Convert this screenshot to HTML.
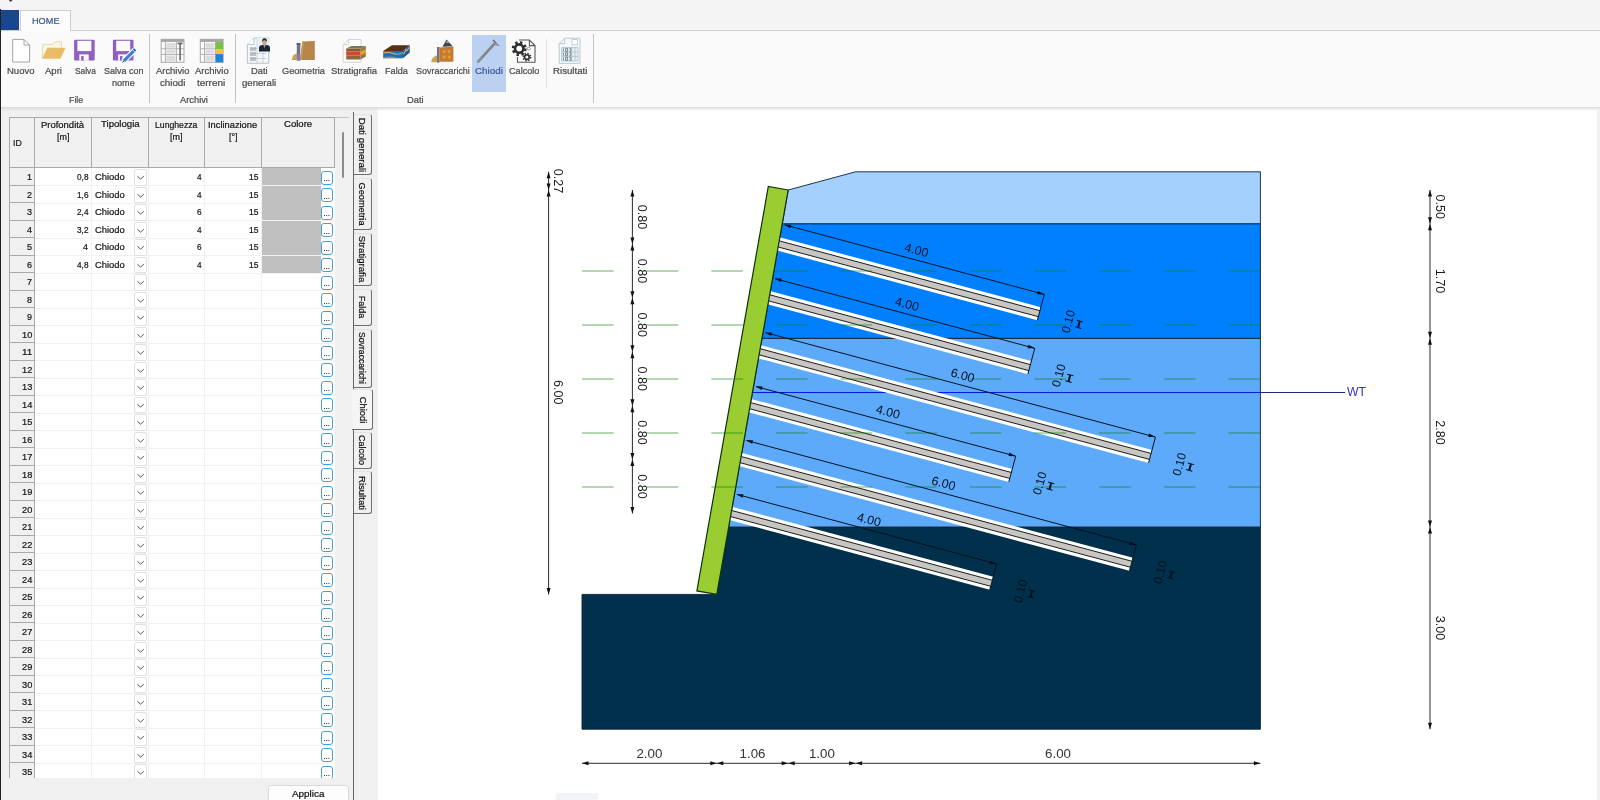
<!DOCTYPE html>
<html lang="it"><head><meta charset="utf-8"><title>Chiodi</title>
<style>
html,body{margin:0;padding:0}
body{width:1600px;height:800px;position:relative;overflow:hidden;background:#fff;font-family:"Liberation Sans",sans-serif;will-change:transform}
.abs{position:absolute}
.t{position:absolute;white-space:nowrap;display:block;transform-origin:0 0;-webkit-text-stroke:0.22px currentColor}

.titlebar{position:absolute;left:0;top:0;width:1600px;height:30px;background:#f4f4f4}
.appbtn{position:absolute;left:0;top:10px;width:18.8px;height:20.7px;background:#19478f}
.tab{position:absolute;left:20px;top:10px;width:50.8px;height:21px;background:#fcfcfc;border:1px solid #cfcfcf;border-bottom:none;box-sizing:border-box}
.rbody{position:absolute;left:0;top:30px;width:1600px;height:76.5px;background:#fafafa;border-top:1px solid #cfcfcf;box-sizing:border-box}
.rshadow{position:absolute;left:0;top:106.5px;width:1600px;height:4.5px;background:linear-gradient(#d9d9d9,rgba(225,225,225,0))}

#grid{position:absolute;left:0;top:0;width:349px;height:778px;overflow:hidden}
.rh{position:absolute;left:9px;width:25.5px;height:17.5px;background:#f0f0f0;border:1px solid #a9a9a9;border-top:none;box-sizing:border-box}
.hl{position:absolute;left:34.5px;width:300px;height:1px;background:#f1f1f1}
.dd{position:absolute;left:133.5px;width:13.5px;height:16.5px;background:#fff;border:1px solid #e1e1e1;border-radius:2px;box-sizing:border-box;overflow:hidden}
.dd svg{position:absolute;left:-1px;top:-1px}
.eb{position:absolute;left:320.7px;width:12.5px;height:14px;background:#fff;border:1.2px solid #4b9fd0;border-radius:3px;box-sizing:border-box}
.eb i{position:absolute;left:2.2px;top:8.6px;width:1px;height:1px;background:#333;box-shadow:2.2px 0 0 #333,4.4px 0 0 #333}
.vtab{position:absolute;left:354px;width:17.5px;background:#f0f0f0;border-top:1px solid #e3e3e3;border-right:1.5px solid #6e6e6e;border-bottom:1.5px solid #6e6e6e;border-radius:0 3px 3px 0;box-sizing:border-box}
.vtab.sel{left:351.5px;width:21.5px;background:#f5f5f5;border-top:1px solid #e3e3e3;border-left:none}
</style></head>
<body>
<svg id="cv" class="abs" style="left:378px;top:107px" width="1222" height="693" viewBox="378 107 1222 693" font-family="'Liberation Sans',sans-serif">
<polygon points="728.7,527.0 1260.4,527.0 1260.4,729.2 582.0,729.2 582.0,594.4 716.8,594.4" fill="#00304b" stroke="#0b2238" stroke-width="0.9"/>
<polygon points="762.0,338.3 1260.4,338.3 1260.4,527.0 728.7,527.0" fill="#5daafa" stroke="#0b2238" stroke-width="0.9"/>
<polygon points="782.3,223.7 1260.4,223.7 1260.4,338.3 762.0,338.3" fill="#0080ff" stroke="#0b2238" stroke-width="0.9"/>
<polygon points="788.2,190.0 855.6,171.8 1260.4,171.8 1260.4,223.7 782.3,223.7" fill="#a4d0fe" stroke="#0b2238" stroke-width="0.9"/>
<line x1="752.5" y1="392.5" x2="1260.4" y2="392.5" stroke="#0818e0" stroke-width="1"/>
<line x1="1260.4" y1="392.5" x2="1345.2" y2="392.5" stroke="#28287a" stroke-width="1"/>
<text x="1347" y="396.2" font-size="12.6" fill="#3530c8" textLength="19" lengthAdjust="spacingAndGlyphs">WT</text>
<g transform="translate(778.72,243.92) rotate(15.0)">
<rect x="0" y="-6.75" width="269.6" height="13.5" fill="#fff"/>
<rect x="0" y="-3.1" width="269.6" height="6.2" fill="#c8c6c2"/>
<line x1="0" y1="-3.1" x2="269.6" y2="-3.1" stroke="#1a1a1a" stroke-width="0.9"/>
<line x1="0" y1="3.1" x2="269.6" y2="3.1" stroke="#1a1a1a" stroke-width="0.9"/>
</g>
<g transform="translate(769.19,297.84) rotate(15.0)">
<rect x="0" y="-6.75" width="269.6" height="13.5" fill="#fff"/>
<rect x="0" y="-3.1" width="269.6" height="6.2" fill="#c8c6c2"/>
<line x1="0" y1="-3.1" x2="269.6" y2="-3.1" stroke="#1a1a1a" stroke-width="0.9"/>
<line x1="0" y1="3.1" x2="269.6" y2="3.1" stroke="#1a1a1a" stroke-width="0.9"/>
</g>
<g transform="translate(759.67,351.76) rotate(15.0)">
<rect x="0" y="-6.75" width="404.4" height="13.5" fill="#fff"/>
<rect x="0" y="-3.1" width="404.4" height="6.2" fill="#c8c6c2"/>
<line x1="0" y1="-3.1" x2="404.4" y2="-3.1" stroke="#1a1a1a" stroke-width="0.9"/>
<line x1="0" y1="3.1" x2="404.4" y2="3.1" stroke="#1a1a1a" stroke-width="0.9"/>
</g>
<g transform="translate(750.14,405.68) rotate(15.0)">
<rect x="0" y="-6.75" width="269.6" height="13.5" fill="#fff"/>
<rect x="0" y="-3.1" width="269.6" height="6.2" fill="#c8c6c2"/>
<line x1="0" y1="-3.1" x2="269.6" y2="-3.1" stroke="#1a1a1a" stroke-width="0.9"/>
<line x1="0" y1="3.1" x2="269.6" y2="3.1" stroke="#1a1a1a" stroke-width="0.9"/>
</g>
<g transform="translate(740.61,459.60) rotate(15.0)">
<rect x="0" y="-6.75" width="404.4" height="13.5" fill="#fff"/>
<rect x="0" y="-3.1" width="404.4" height="6.2" fill="#c8c6c2"/>
<line x1="0" y1="-3.1" x2="404.4" y2="-3.1" stroke="#1a1a1a" stroke-width="0.9"/>
<line x1="0" y1="3.1" x2="404.4" y2="3.1" stroke="#1a1a1a" stroke-width="0.9"/>
</g>
<g transform="translate(731.09,513.52) rotate(15.0)">
<rect x="0" y="-6.75" width="269.6" height="13.5" fill="#fff"/>
<rect x="0" y="-3.1" width="269.6" height="6.2" fill="#c8c6c2"/>
<line x1="0" y1="-3.1" x2="269.6" y2="-3.1" stroke="#1a1a1a" stroke-width="0.9"/>
<line x1="0" y1="3.1" x2="269.6" y2="3.1" stroke="#1a1a1a" stroke-width="0.9"/>
</g>
<polygon points="788.2,190.0 768.3,186.5 696.9,590.9 716.8,594.4" fill="#9acd32" stroke="#10300a" stroke-width="1.2"/>
<line x1="582.0" y1="271" x2="1260.4" y2="271" stroke="#008000" stroke-opacity="0.6" stroke-width="1" stroke-dasharray="31.6 33.05"/>
<line x1="582.0" y1="325" x2="1260.4" y2="325" stroke="#008000" stroke-opacity="0.6" stroke-width="1" stroke-dasharray="31.6 33.05"/>
<line x1="582.0" y1="379" x2="1260.4" y2="379" stroke="#008000" stroke-opacity="0.6" stroke-width="1" stroke-dasharray="31.6 33.05"/>
<line x1="582.0" y1="433" x2="1260.4" y2="433" stroke="#008000" stroke-opacity="0.6" stroke-width="1" stroke-dasharray="31.6 33.05"/>
<line x1="582.0" y1="487" x2="1260.4" y2="487" stroke="#008000" stroke-opacity="0.6" stroke-width="1" stroke-dasharray="31.6 33.05"/>
<g transform="translate(778.72,243.92) rotate(15.0)">
<line x1="1" y1="-20.0" x2="269.6" y2="-20.0" stroke="#02101f" stroke-width="0.9"/>
<line x1="269.6" y1="-20.0" x2="269.6" y2="6.75" stroke="#02101f" stroke-width="0.9"/>
<polygon points="0.0,-20.0 7.0,-21.8 7.0,-18.2" fill="#02101f"/>
<polygon points="269.6,-20.0 262.6,-18.2 262.6,-21.8" fill="#02101f"/>
<text x="134.8" y="-25.5" font-size="12.4" fill="#02101f" text-anchor="middle">4.00</text>
<g transform="translate(299.6,0) rotate(-90)"><text x="0" y="4.2" font-size="12" fill="#02101f" text-anchor="middle">0.10</text></g>
<path d="M310.8 -3.3 L310.8 3.3" stroke="#02101f" stroke-width="2" fill="none"/>
<path d="M307.6 -3.4 L314.0 -3.4 M307.6 3.4 L314.0 3.4" stroke="#02101f" stroke-width="1" fill="none"/>
</g>
<g transform="translate(769.19,297.84) rotate(15.0)">
<line x1="1" y1="-20.0" x2="269.6" y2="-20.0" stroke="#02101f" stroke-width="0.9"/>
<line x1="269.6" y1="-20.0" x2="269.6" y2="6.75" stroke="#02101f" stroke-width="0.9"/>
<polygon points="0.0,-20.0 7.0,-21.8 7.0,-18.2" fill="#02101f"/>
<polygon points="269.6,-20.0 262.6,-18.2 262.6,-21.8" fill="#02101f"/>
<text x="134.8" y="-25.5" font-size="12.4" fill="#02101f" text-anchor="middle">4.00</text>
<g transform="translate(299.6,0) rotate(-90)"><text x="0" y="4.2" font-size="12" fill="#02101f" text-anchor="middle">0.10</text></g>
<path d="M310.8 -3.3 L310.8 3.3" stroke="#02101f" stroke-width="2" fill="none"/>
<path d="M307.6 -3.4 L314.0 -3.4 M307.6 3.4 L314.0 3.4" stroke="#02101f" stroke-width="1" fill="none"/>
</g>
<g transform="translate(759.67,351.76) rotate(15.0)">
<line x1="1" y1="-20.0" x2="404.4" y2="-20.0" stroke="#02101f" stroke-width="0.9"/>
<line x1="404.4" y1="-20.0" x2="404.4" y2="6.75" stroke="#02101f" stroke-width="0.9"/>
<polygon points="0.0,-20.0 7.0,-21.8 7.0,-18.2" fill="#02101f"/>
<polygon points="404.4,-20.0 397.4,-18.2 397.4,-21.8" fill="#02101f"/>
<text x="202.2" y="-25.5" font-size="12.4" fill="#02101f" text-anchor="middle">6.00</text>
<g transform="translate(434.4,0) rotate(-90)"><text x="0" y="4.2" font-size="12" fill="#02101f" text-anchor="middle">0.10</text></g>
<path d="M445.6 -3.3 L445.6 3.3" stroke="#02101f" stroke-width="2" fill="none"/>
<path d="M442.4 -3.4 L448.8 -3.4 M442.4 3.4 L448.8 3.4" stroke="#02101f" stroke-width="1" fill="none"/>
</g>
<g transform="translate(750.14,405.68) rotate(15.0)">
<line x1="1" y1="-20.0" x2="269.6" y2="-20.0" stroke="#02101f" stroke-width="0.9"/>
<line x1="269.6" y1="-20.0" x2="269.6" y2="6.75" stroke="#02101f" stroke-width="0.9"/>
<polygon points="0.0,-20.0 7.0,-21.8 7.0,-18.2" fill="#02101f"/>
<polygon points="269.6,-20.0 262.6,-18.2 262.6,-21.8" fill="#02101f"/>
<text x="134.8" y="-25.5" font-size="12.4" fill="#02101f" text-anchor="middle">4.00</text>
<g transform="translate(299.6,0) rotate(-90)"><text x="0" y="4.2" font-size="12" fill="#02101f" text-anchor="middle">0.10</text></g>
<path d="M310.8 -3.3 L310.8 3.3" stroke="#02101f" stroke-width="2" fill="none"/>
<path d="M307.6 -3.4 L314.0 -3.4 M307.6 3.4 L314.0 3.4" stroke="#02101f" stroke-width="1" fill="none"/>
</g>
<g transform="translate(740.61,459.60) rotate(15.0)">
<line x1="1" y1="-20.0" x2="404.4" y2="-20.0" stroke="#02101f" stroke-width="0.9"/>
<line x1="404.4" y1="-20.0" x2="404.4" y2="6.75" stroke="#02101f" stroke-width="0.9"/>
<polygon points="0.0,-20.0 7.0,-21.8 7.0,-18.2" fill="#02101f"/>
<polygon points="404.4,-20.0 397.4,-18.2 397.4,-21.8" fill="#02101f"/>
<text x="202.2" y="-25.5" font-size="12.4" fill="#02101f" text-anchor="middle">6.00</text>
<g transform="translate(434.4,0) rotate(-90)"><text x="0" y="4.2" font-size="12" fill="#02101f" text-anchor="middle">0.10</text></g>
<path d="M445.6 -3.3 L445.6 3.3" stroke="#02101f" stroke-width="2" fill="none"/>
<path d="M442.4 -3.4 L448.8 -3.4 M442.4 3.4 L448.8 3.4" stroke="#02101f" stroke-width="1" fill="none"/>
</g>
<g transform="translate(731.09,513.52) rotate(15.0)">
<line x1="1" y1="-20.0" x2="269.6" y2="-20.0" stroke="#02101f" stroke-width="0.9"/>
<line x1="269.6" y1="-20.0" x2="269.6" y2="6.75" stroke="#02101f" stroke-width="0.9"/>
<polygon points="0.0,-20.0 7.0,-21.8 7.0,-18.2" fill="#02101f"/>
<polygon points="269.6,-20.0 262.6,-18.2 262.6,-21.8" fill="#02101f"/>
<text x="134.8" y="-25.5" font-size="12.4" fill="#02101f" text-anchor="middle">4.00</text>
<g transform="translate(299.6,0) rotate(-90)"><text x="0" y="4.2" font-size="12" fill="#02101f" text-anchor="middle">0.10</text></g>
<path d="M310.8 -3.3 L310.8 3.3" stroke="#02101f" stroke-width="2" fill="none"/>
<path d="M307.6 -3.4 L314.0 -3.4 M307.6 3.4 L314.0 3.4" stroke="#02101f" stroke-width="1" fill="none"/>
</g>
<line x1="548.6" y1="171.8" x2="548.6" y2="190.0" stroke="#111" stroke-width="0.9"/>
<polygon points="548.6,171.8 550.6,178.3 546.6,178.3" fill="#111"/>
<polygon points="548.6,190.0 546.6,183.5 550.6,183.5" fill="#111"/>
<g transform="translate(554.1,180.9) rotate(90)"><text x="0" y="0" font-size="12.6" fill="#1a1a1a" text-anchor="middle">0.27</text></g>
<line x1="548.6" y1="190.0" x2="548.6" y2="594.4" stroke="#111" stroke-width="0.9"/>
<polygon points="548.6,190.0 550.6,196.5 546.6,196.5" fill="#111"/>
<polygon points="548.6,594.4 546.6,587.9 550.6,587.9" fill="#111"/>
<g transform="translate(554.1,392.2) rotate(90)"><text x="0" y="0" font-size="12.6" fill="#1a1a1a" text-anchor="middle">6.00</text></g>
<line x1="632.4" y1="190.0" x2="632.4" y2="243.9" stroke="#111" stroke-width="0.9"/>
<polygon points="632.4,190.0 634.4,196.5 630.4,196.5" fill="#111"/>
<polygon points="632.4,243.9 630.4,237.4 634.4,237.4" fill="#111"/>
<g transform="translate(637.9,217.0) rotate(90)"><text x="0" y="0" font-size="12.6" fill="#1a1a1a" text-anchor="middle">0.80</text></g>
<line x1="632.4" y1="243.9" x2="632.4" y2="297.8" stroke="#111" stroke-width="0.9"/>
<polygon points="632.4,243.9 634.4,250.4 630.4,250.4" fill="#111"/>
<polygon points="632.4,297.8 630.4,291.3 634.4,291.3" fill="#111"/>
<g transform="translate(637.9,270.9) rotate(90)"><text x="0" y="0" font-size="12.6" fill="#1a1a1a" text-anchor="middle">0.80</text></g>
<line x1="632.4" y1="297.8" x2="632.4" y2="351.8" stroke="#111" stroke-width="0.9"/>
<polygon points="632.4,297.8 634.4,304.3 630.4,304.3" fill="#111"/>
<polygon points="632.4,351.8 630.4,345.3 634.4,345.3" fill="#111"/>
<g transform="translate(637.9,324.8) rotate(90)"><text x="0" y="0" font-size="12.6" fill="#1a1a1a" text-anchor="middle">0.80</text></g>
<line x1="632.4" y1="351.8" x2="632.4" y2="405.7" stroke="#111" stroke-width="0.9"/>
<polygon points="632.4,351.8 634.4,358.3 630.4,358.3" fill="#111"/>
<polygon points="632.4,405.7 630.4,399.2 634.4,399.2" fill="#111"/>
<g transform="translate(637.9,378.7) rotate(90)"><text x="0" y="0" font-size="12.6" fill="#1a1a1a" text-anchor="middle">0.80</text></g>
<line x1="632.4" y1="405.7" x2="632.4" y2="459.6" stroke="#111" stroke-width="0.9"/>
<polygon points="632.4,405.7 634.4,412.2 630.4,412.2" fill="#111"/>
<polygon points="632.4,459.6 630.4,453.1 634.4,453.1" fill="#111"/>
<g transform="translate(637.9,432.6) rotate(90)"><text x="0" y="0" font-size="12.6" fill="#1a1a1a" text-anchor="middle">0.80</text></g>
<line x1="632.4" y1="459.6" x2="632.4" y2="513.5" stroke="#111" stroke-width="0.9"/>
<polygon points="632.4,459.6 634.4,466.1 630.4,466.1" fill="#111"/>
<polygon points="632.4,513.5 630.4,507.0 634.4,507.0" fill="#111"/>
<g transform="translate(637.9,486.6) rotate(90)"><text x="0" y="0" font-size="12.6" fill="#1a1a1a" text-anchor="middle">0.80</text></g>
<line x1="1430" y1="190.0" x2="1430" y2="223.7" stroke="#111" stroke-width="0.9"/>
<polygon points="1430.0,190.0 1432.0,196.5 1428.0,196.5" fill="#111"/>
<polygon points="1430.0,223.7 1428.0,217.2 1432.0,217.2" fill="#111"/>
<g transform="translate(1435.5,206.8) rotate(90)"><text x="0" y="0" font-size="12.6" fill="#1a1a1a" text-anchor="middle">0.50</text></g>
<line x1="1430" y1="223.7" x2="1430" y2="338.3" stroke="#111" stroke-width="0.9"/>
<polygon points="1430.0,223.7 1432.0,230.2 1428.0,230.2" fill="#111"/>
<polygon points="1430.0,338.3 1428.0,331.8 1432.0,331.8" fill="#111"/>
<g transform="translate(1435.5,281.0) rotate(90)"><text x="0" y="0" font-size="12.6" fill="#1a1a1a" text-anchor="middle">1.70</text></g>
<line x1="1430" y1="338.3" x2="1430" y2="527.0" stroke="#111" stroke-width="0.9"/>
<polygon points="1430.0,338.3 1432.0,344.8 1428.0,344.8" fill="#111"/>
<polygon points="1430.0,527.0 1428.0,520.5 1432.0,520.5" fill="#111"/>
<g transform="translate(1435.5,432.6) rotate(90)"><text x="0" y="0" font-size="12.6" fill="#1a1a1a" text-anchor="middle">2.80</text></g>
<line x1="1430" y1="527.0" x2="1430" y2="729.2" stroke="#111" stroke-width="0.9"/>
<polygon points="1430.0,527.0 1432.0,533.5 1428.0,533.5" fill="#111"/>
<polygon points="1430.0,729.2 1428.0,722.7 1432.0,722.7" fill="#111"/>
<g transform="translate(1435.5,628.1) rotate(90)"><text x="0" y="0" font-size="12.6" fill="#1a1a1a" text-anchor="middle">3.00</text></g>
<line x1="582.0" y1="763.3" x2="716.8" y2="763.3" stroke="#111" stroke-width="0.9"/>
<polygon points="582.0,763.3 588.5,761.3 588.5,765.3" fill="#111"/>
<polygon points="716.8,763.3 710.3,765.3 710.3,761.3" fill="#111"/>
<text x="649.4" y="758.2" font-size="13.3" fill="#333" text-anchor="middle">2.00</text>
<line x1="716.8" y1="763.3" x2="788.2" y2="763.3" stroke="#111" stroke-width="0.9"/>
<polygon points="716.8,763.3 723.3,761.3 723.3,765.3" fill="#111"/>
<polygon points="788.2,763.3 781.7,765.3 781.7,761.3" fill="#111"/>
<text x="752.5" y="758.2" font-size="13.3" fill="#333" text-anchor="middle">1.06</text>
<line x1="788.2" y1="763.3" x2="855.6" y2="763.3" stroke="#111" stroke-width="0.9"/>
<polygon points="788.2,763.3 794.7,761.3 794.7,765.3" fill="#111"/>
<polygon points="855.6,763.3 849.1,765.3 849.1,761.3" fill="#111"/>
<text x="821.9" y="758.2" font-size="13.3" fill="#333" text-anchor="middle">1.00</text>
<line x1="855.6" y1="763.3" x2="1260.4" y2="763.3" stroke="#111" stroke-width="0.9"/>
<polygon points="855.6,763.3 862.1,761.3 862.1,765.3" fill="#111"/>
<polygon points="1260.4,763.3 1253.9,765.3 1253.9,761.3" fill="#111"/>
<text x="1058.0" y="758.2" font-size="13.3" fill="#333" text-anchor="middle">6.00</text>
<rect x="556" y="793" width="42.5" height="12" rx="3" fill="#f1f3f8"/>
</svg>
<div id="panel">
<div class="abs" style="left:1px;top:106px;width:377px;height:694px;background:#f0f0f0"></div>
<div id="grid">
<div class="abs" style="left:34.5px;top:168px;width:300.0px;height:620px;background:#fff"></div>
<div class="abs" style="left:9px;top:116.5px;width:325.5px;height:51.5px;background:#f0f0f0;border:1px solid #a9a9a9;box-sizing:border-box"></div>
<div class="abs" style="left:34.0px;top:116.5px;width:1px;height:51.5px;background:#a9a9a9"></div>
<div class="abs" style="left:91.0px;top:116.5px;width:1px;height:51.5px;background:#a9a9a9"></div>
<div class="abs" style="left:147.5px;top:116.5px;width:1px;height:51.5px;background:#a9a9a9"></div>
<div class="abs" style="left:204.0px;top:116.5px;width:1px;height:51.5px;background:#a9a9a9"></div>
<div class="abs" style="left:261.0px;top:116.5px;width:1px;height:51.5px;background:#a9a9a9"></div>
<div class="abs" style="left:334.5px;top:116.5px;width:14.5px;height:1px;background:#c4c4c4"></div>
<div class="abs" style="left:348.5px;top:116.5px;width:1px;height:662px;background:#e4e4e4"></div>
<span class="t" style="left:12.50px;top:136.80px;font-size:9.4px;line-height:12px;color:#151515;transform:scaleX(0.931);">ID</span>
<span class="t" style="left:41.27px;top:118.80px;font-size:9.4px;line-height:12px;color:#151515;transform:scaleX(1.009);">Profondità</span>
<span class="t" style="left:56.65px;top:130.80px;font-size:9.4px;line-height:12px;color:#151515;transform:scaleX(0.958);">[m]</span>
<span class="t" style="left:100.53px;top:118.30px;font-size:9.4px;line-height:12px;color:#151515;transform:scaleX(1.025);">Tipologia</span>
<span class="t" style="left:154.55px;top:118.80px;font-size:9.4px;line-height:12px;color:#151515;transform:scaleX(0.924);">Lunghezza</span>
<span class="t" style="left:169.55px;top:130.80px;font-size:9.4px;line-height:12px;color:#151515;transform:scaleX(0.958);">[m]</span>
<span class="t" style="left:208.28px;top:118.80px;font-size:9.4px;line-height:12px;color:#151515;transform:scaleX(0.992);">Inclinazione</span>
<span class="t" style="left:228.65px;top:130.80px;font-size:9.4px;line-height:12px;color:#151515;transform:scaleX(0.946);">[°]</span>
<span class="t" style="left:284.27px;top:118.30px;font-size:9.4px;line-height:12px;color:#151515;transform:scaleX(1.020);">Colore</span>
<div class="rh" style="top:168.0px"></div>
<span class="t" style="left:27.00px;top:171.10px;font-size:9.4px;line-height:12px;color:#151515;transform:scaleX(0.956);">1</span>
<div class="hl" style="top:185.0px"></div>
<div class="dd" style="top:169.0px"><svg width="13" height="15" viewBox="0 0 13 15"><path d="M3.4 7.2 L6.6 10.2 L9.8 7.2" fill="none" stroke="#555" stroke-width="1"/></svg></div>
<div class="eb" style="top:170.5px"><i></i></div>
<div class="abs" style="left:262px;top:168.0px;width:58.5px;height:17.0px;background:#c0c0c0"></div>
<span class="t" style="left:76.70px;top:171.10px;font-size:9.4px;line-height:12px;color:#151515;transform:scaleX(0.880);">0,8</span>
<span class="t" style="left:94.50px;top:171.10px;font-size:9.4px;line-height:12px;color:#151515;transform:scaleX(0.999);">Chiodo</span>
<span class="t" style="left:196.70px;top:171.10px;font-size:9.4px;line-height:12px;color:#151515;transform:scaleX(0.880);">4</span>
<span class="t" style="left:248.70px;top:171.10px;font-size:9.4px;line-height:12px;color:#151515;transform:scaleX(0.909);">15</span>
<div class="rh" style="top:185.5px"></div>
<span class="t" style="left:27.00px;top:188.60px;font-size:9.4px;line-height:12px;color:#151515;transform:scaleX(0.956);">2</span>
<div class="hl" style="top:202.5px"></div>
<div class="dd" style="top:186.5px"><svg width="13" height="15" viewBox="0 0 13 15"><path d="M3.4 7.2 L6.6 10.2 L9.8 7.2" fill="none" stroke="#555" stroke-width="1"/></svg></div>
<div class="eb" style="top:188.0px"><i></i></div>
<div class="abs" style="left:262px;top:185.5px;width:58.5px;height:17.0px;background:#c0c0c0"></div>
<span class="t" style="left:76.70px;top:188.60px;font-size:9.4px;line-height:12px;color:#151515;transform:scaleX(0.880);">1,6</span>
<span class="t" style="left:94.50px;top:188.60px;font-size:9.4px;line-height:12px;color:#151515;transform:scaleX(0.999);">Chiodo</span>
<span class="t" style="left:196.70px;top:188.60px;font-size:9.4px;line-height:12px;color:#151515;transform:scaleX(0.880);">4</span>
<span class="t" style="left:248.70px;top:188.60px;font-size:9.4px;line-height:12px;color:#151515;transform:scaleX(0.909);">15</span>
<div class="rh" style="top:203.0px"></div>
<span class="t" style="left:27.00px;top:206.10px;font-size:9.4px;line-height:12px;color:#151515;transform:scaleX(0.956);">3</span>
<div class="hl" style="top:220.0px"></div>
<div class="dd" style="top:204.0px"><svg width="13" height="15" viewBox="0 0 13 15"><path d="M3.4 7.2 L6.6 10.2 L9.8 7.2" fill="none" stroke="#555" stroke-width="1"/></svg></div>
<div class="eb" style="top:205.5px"><i></i></div>
<div class="abs" style="left:262px;top:203.0px;width:58.5px;height:17.0px;background:#c0c0c0"></div>
<span class="t" style="left:76.70px;top:206.10px;font-size:9.4px;line-height:12px;color:#151515;transform:scaleX(0.880);">2,4</span>
<span class="t" style="left:94.50px;top:206.10px;font-size:9.4px;line-height:12px;color:#151515;transform:scaleX(0.999);">Chiodo</span>
<span class="t" style="left:196.70px;top:206.10px;font-size:9.4px;line-height:12px;color:#151515;transform:scaleX(0.880);">6</span>
<span class="t" style="left:248.70px;top:206.10px;font-size:9.4px;line-height:12px;color:#151515;transform:scaleX(0.909);">15</span>
<div class="rh" style="top:220.5px"></div>
<span class="t" style="left:27.00px;top:223.60px;font-size:9.4px;line-height:12px;color:#151515;transform:scaleX(0.956);">4</span>
<div class="hl" style="top:237.5px"></div>
<div class="dd" style="top:221.5px"><svg width="13" height="15" viewBox="0 0 13 15"><path d="M3.4 7.2 L6.6 10.2 L9.8 7.2" fill="none" stroke="#555" stroke-width="1"/></svg></div>
<div class="eb" style="top:223.0px"><i></i></div>
<div class="abs" style="left:262px;top:220.5px;width:58.5px;height:17.0px;background:#c0c0c0"></div>
<span class="t" style="left:76.70px;top:223.60px;font-size:9.4px;line-height:12px;color:#151515;transform:scaleX(0.880);">3,2</span>
<span class="t" style="left:94.50px;top:223.60px;font-size:9.4px;line-height:12px;color:#151515;transform:scaleX(0.999);">Chiodo</span>
<span class="t" style="left:196.70px;top:223.60px;font-size:9.4px;line-height:12px;color:#151515;transform:scaleX(0.880);">4</span>
<span class="t" style="left:248.70px;top:223.60px;font-size:9.4px;line-height:12px;color:#151515;transform:scaleX(0.909);">15</span>
<div class="rh" style="top:238.0px"></div>
<span class="t" style="left:27.00px;top:241.10px;font-size:9.4px;line-height:12px;color:#151515;transform:scaleX(0.956);">5</span>
<div class="hl" style="top:255.0px"></div>
<div class="dd" style="top:239.0px"><svg width="13" height="15" viewBox="0 0 13 15"><path d="M3.4 7.2 L6.6 10.2 L9.8 7.2" fill="none" stroke="#555" stroke-width="1"/></svg></div>
<div class="eb" style="top:240.5px"><i></i></div>
<div class="abs" style="left:262px;top:238.0px;width:58.5px;height:17.0px;background:#c0c0c0"></div>
<span class="t" style="left:83.20px;top:241.10px;font-size:9.4px;line-height:12px;color:#151515;transform:scaleX(0.956);">4</span>
<span class="t" style="left:94.50px;top:241.10px;font-size:9.4px;line-height:12px;color:#151515;transform:scaleX(0.999);">Chiodo</span>
<span class="t" style="left:196.70px;top:241.10px;font-size:9.4px;line-height:12px;color:#151515;transform:scaleX(0.880);">6</span>
<span class="t" style="left:248.70px;top:241.10px;font-size:9.4px;line-height:12px;color:#151515;transform:scaleX(0.909);">15</span>
<div class="rh" style="top:255.5px"></div>
<span class="t" style="left:27.00px;top:258.60px;font-size:9.4px;line-height:12px;color:#151515;transform:scaleX(0.956);">6</span>
<div class="hl" style="top:272.5px"></div>
<div class="dd" style="top:256.5px"><svg width="13" height="15" viewBox="0 0 13 15"><path d="M3.4 7.2 L6.6 10.2 L9.8 7.2" fill="none" stroke="#555" stroke-width="1"/></svg></div>
<div class="eb" style="top:258.0px"><i></i></div>
<div class="abs" style="left:262px;top:255.5px;width:58.5px;height:17.0px;background:#c0c0c0"></div>
<span class="t" style="left:76.70px;top:258.60px;font-size:9.4px;line-height:12px;color:#151515;transform:scaleX(0.880);">4,8</span>
<span class="t" style="left:94.50px;top:258.60px;font-size:9.4px;line-height:12px;color:#151515;transform:scaleX(0.999);">Chiodo</span>
<span class="t" style="left:196.70px;top:258.60px;font-size:9.4px;line-height:12px;color:#151515;transform:scaleX(0.880);">4</span>
<span class="t" style="left:248.70px;top:258.60px;font-size:9.4px;line-height:12px;color:#151515;transform:scaleX(0.909);">15</span>
<div class="rh" style="top:273.0px"></div>
<span class="t" style="left:27.00px;top:276.10px;font-size:9.4px;line-height:12px;color:#151515;transform:scaleX(0.956);">7</span>
<div class="hl" style="top:290.0px"></div>
<div class="dd" style="top:274.0px"><svg width="13" height="15" viewBox="0 0 13 15"><path d="M3.4 7.2 L6.6 10.2 L9.8 7.2" fill="none" stroke="#555" stroke-width="1"/></svg></div>
<div class="eb" style="top:275.5px"><i></i></div>
<div class="rh" style="top:290.5px"></div>
<span class="t" style="left:27.00px;top:293.60px;font-size:9.4px;line-height:12px;color:#151515;transform:scaleX(0.956);">8</span>
<div class="hl" style="top:307.5px"></div>
<div class="dd" style="top:291.5px"><svg width="13" height="15" viewBox="0 0 13 15"><path d="M3.4 7.2 L6.6 10.2 L9.8 7.2" fill="none" stroke="#555" stroke-width="1"/></svg></div>
<div class="eb" style="top:293.0px"><i></i></div>
<div class="rh" style="top:308.0px"></div>
<span class="t" style="left:27.00px;top:311.10px;font-size:9.4px;line-height:12px;color:#151515;transform:scaleX(0.956);">9</span>
<div class="hl" style="top:325.0px"></div>
<div class="dd" style="top:309.0px"><svg width="13" height="15" viewBox="0 0 13 15"><path d="M3.4 7.2 L6.6 10.2 L9.8 7.2" fill="none" stroke="#555" stroke-width="1"/></svg></div>
<div class="eb" style="top:310.5px"><i></i></div>
<div class="rh" style="top:325.5px"></div>
<span class="t" style="left:21.70px;top:328.60px;font-size:9.4px;line-height:12px;color:#151515;transform:scaleX(0.985);">10</span>
<div class="hl" style="top:342.5px"></div>
<div class="dd" style="top:326.5px"><svg width="13" height="15" viewBox="0 0 13 15"><path d="M3.4 7.2 L6.6 10.2 L9.8 7.2" fill="none" stroke="#555" stroke-width="1"/></svg></div>
<div class="eb" style="top:328.0px"><i></i></div>
<div class="rh" style="top:343.0px"></div>
<span class="t" style="left:21.70px;top:346.10px;font-size:9.4px;line-height:12px;color:#151515;transform:scaleX(1.056);">11</span>
<div class="hl" style="top:360.0px"></div>
<div class="dd" style="top:344.0px"><svg width="13" height="15" viewBox="0 0 13 15"><path d="M3.4 7.2 L6.6 10.2 L9.8 7.2" fill="none" stroke="#555" stroke-width="1"/></svg></div>
<div class="eb" style="top:345.5px"><i></i></div>
<div class="rh" style="top:360.5px"></div>
<span class="t" style="left:21.70px;top:363.60px;font-size:9.4px;line-height:12px;color:#151515;transform:scaleX(0.985);">12</span>
<div class="hl" style="top:377.5px"></div>
<div class="dd" style="top:361.5px"><svg width="13" height="15" viewBox="0 0 13 15"><path d="M3.4 7.2 L6.6 10.2 L9.8 7.2" fill="none" stroke="#555" stroke-width="1"/></svg></div>
<div class="eb" style="top:363.0px"><i></i></div>
<div class="rh" style="top:378.0px"></div>
<span class="t" style="left:21.70px;top:381.10px;font-size:9.4px;line-height:12px;color:#151515;transform:scaleX(0.985);">13</span>
<div class="hl" style="top:395.0px"></div>
<div class="dd" style="top:379.0px"><svg width="13" height="15" viewBox="0 0 13 15"><path d="M3.4 7.2 L6.6 10.2 L9.8 7.2" fill="none" stroke="#555" stroke-width="1"/></svg></div>
<div class="eb" style="top:380.5px"><i></i></div>
<div class="rh" style="top:395.5px"></div>
<span class="t" style="left:21.70px;top:398.60px;font-size:9.4px;line-height:12px;color:#151515;transform:scaleX(0.985);">14</span>
<div class="hl" style="top:412.5px"></div>
<div class="dd" style="top:396.5px"><svg width="13" height="15" viewBox="0 0 13 15"><path d="M3.4 7.2 L6.6 10.2 L9.8 7.2" fill="none" stroke="#555" stroke-width="1"/></svg></div>
<div class="eb" style="top:398.0px"><i></i></div>
<div class="rh" style="top:413.0px"></div>
<span class="t" style="left:21.70px;top:416.10px;font-size:9.4px;line-height:12px;color:#151515;transform:scaleX(0.985);">15</span>
<div class="hl" style="top:430.0px"></div>
<div class="dd" style="top:414.0px"><svg width="13" height="15" viewBox="0 0 13 15"><path d="M3.4 7.2 L6.6 10.2 L9.8 7.2" fill="none" stroke="#555" stroke-width="1"/></svg></div>
<div class="eb" style="top:415.5px"><i></i></div>
<div class="rh" style="top:430.5px"></div>
<span class="t" style="left:21.70px;top:433.60px;font-size:9.4px;line-height:12px;color:#151515;transform:scaleX(0.985);">16</span>
<div class="hl" style="top:447.5px"></div>
<div class="dd" style="top:431.5px"><svg width="13" height="15" viewBox="0 0 13 15"><path d="M3.4 7.2 L6.6 10.2 L9.8 7.2" fill="none" stroke="#555" stroke-width="1"/></svg></div>
<div class="eb" style="top:433.0px"><i></i></div>
<div class="rh" style="top:448.0px"></div>
<span class="t" style="left:21.70px;top:451.10px;font-size:9.4px;line-height:12px;color:#151515;transform:scaleX(0.985);">17</span>
<div class="hl" style="top:465.0px"></div>
<div class="dd" style="top:449.0px"><svg width="13" height="15" viewBox="0 0 13 15"><path d="M3.4 7.2 L6.6 10.2 L9.8 7.2" fill="none" stroke="#555" stroke-width="1"/></svg></div>
<div class="eb" style="top:450.5px"><i></i></div>
<div class="rh" style="top:465.5px"></div>
<span class="t" style="left:21.70px;top:468.60px;font-size:9.4px;line-height:12px;color:#151515;transform:scaleX(0.985);">18</span>
<div class="hl" style="top:482.5px"></div>
<div class="dd" style="top:466.5px"><svg width="13" height="15" viewBox="0 0 13 15"><path d="M3.4 7.2 L6.6 10.2 L9.8 7.2" fill="none" stroke="#555" stroke-width="1"/></svg></div>
<div class="eb" style="top:468.0px"><i></i></div>
<div class="rh" style="top:483.0px"></div>
<span class="t" style="left:21.70px;top:486.10px;font-size:9.4px;line-height:12px;color:#151515;transform:scaleX(0.985);">19</span>
<div class="hl" style="top:500.0px"></div>
<div class="dd" style="top:484.0px"><svg width="13" height="15" viewBox="0 0 13 15"><path d="M3.4 7.2 L6.6 10.2 L9.8 7.2" fill="none" stroke="#555" stroke-width="1"/></svg></div>
<div class="eb" style="top:485.5px"><i></i></div>
<div class="rh" style="top:500.5px"></div>
<span class="t" style="left:21.70px;top:503.60px;font-size:9.4px;line-height:12px;color:#151515;transform:scaleX(0.985);">20</span>
<div class="hl" style="top:517.5px"></div>
<div class="dd" style="top:501.5px"><svg width="13" height="15" viewBox="0 0 13 15"><path d="M3.4 7.2 L6.6 10.2 L9.8 7.2" fill="none" stroke="#555" stroke-width="1"/></svg></div>
<div class="eb" style="top:503.0px"><i></i></div>
<div class="rh" style="top:518.0px"></div>
<span class="t" style="left:21.70px;top:521.10px;font-size:9.4px;line-height:12px;color:#151515;transform:scaleX(0.985);">21</span>
<div class="hl" style="top:535.0px"></div>
<div class="dd" style="top:519.0px"><svg width="13" height="15" viewBox="0 0 13 15"><path d="M3.4 7.2 L6.6 10.2 L9.8 7.2" fill="none" stroke="#555" stroke-width="1"/></svg></div>
<div class="eb" style="top:520.5px"><i></i></div>
<div class="rh" style="top:535.5px"></div>
<span class="t" style="left:21.70px;top:538.60px;font-size:9.4px;line-height:12px;color:#151515;transform:scaleX(0.985);">22</span>
<div class="hl" style="top:552.5px"></div>
<div class="dd" style="top:536.5px"><svg width="13" height="15" viewBox="0 0 13 15"><path d="M3.4 7.2 L6.6 10.2 L9.8 7.2" fill="none" stroke="#555" stroke-width="1"/></svg></div>
<div class="eb" style="top:538.0px"><i></i></div>
<div class="rh" style="top:553.0px"></div>
<span class="t" style="left:21.70px;top:556.10px;font-size:9.4px;line-height:12px;color:#151515;transform:scaleX(0.985);">23</span>
<div class="hl" style="top:570.0px"></div>
<div class="dd" style="top:554.0px"><svg width="13" height="15" viewBox="0 0 13 15"><path d="M3.4 7.2 L6.6 10.2 L9.8 7.2" fill="none" stroke="#555" stroke-width="1"/></svg></div>
<div class="eb" style="top:555.5px"><i></i></div>
<div class="rh" style="top:570.5px"></div>
<span class="t" style="left:21.70px;top:573.60px;font-size:9.4px;line-height:12px;color:#151515;transform:scaleX(0.985);">24</span>
<div class="hl" style="top:587.5px"></div>
<div class="dd" style="top:571.5px"><svg width="13" height="15" viewBox="0 0 13 15"><path d="M3.4 7.2 L6.6 10.2 L9.8 7.2" fill="none" stroke="#555" stroke-width="1"/></svg></div>
<div class="eb" style="top:573.0px"><i></i></div>
<div class="rh" style="top:588.0px"></div>
<span class="t" style="left:21.70px;top:591.10px;font-size:9.4px;line-height:12px;color:#151515;transform:scaleX(0.985);">25</span>
<div class="hl" style="top:605.0px"></div>
<div class="dd" style="top:589.0px"><svg width="13" height="15" viewBox="0 0 13 15"><path d="M3.4 7.2 L6.6 10.2 L9.8 7.2" fill="none" stroke="#555" stroke-width="1"/></svg></div>
<div class="eb" style="top:590.5px"><i></i></div>
<div class="rh" style="top:605.5px"></div>
<span class="t" style="left:21.70px;top:608.60px;font-size:9.4px;line-height:12px;color:#151515;transform:scaleX(0.985);">26</span>
<div class="hl" style="top:622.5px"></div>
<div class="dd" style="top:606.5px"><svg width="13" height="15" viewBox="0 0 13 15"><path d="M3.4 7.2 L6.6 10.2 L9.8 7.2" fill="none" stroke="#555" stroke-width="1"/></svg></div>
<div class="eb" style="top:608.0px"><i></i></div>
<div class="rh" style="top:623.0px"></div>
<span class="t" style="left:21.70px;top:626.10px;font-size:9.4px;line-height:12px;color:#151515;transform:scaleX(0.985);">27</span>
<div class="hl" style="top:640.0px"></div>
<div class="dd" style="top:624.0px"><svg width="13" height="15" viewBox="0 0 13 15"><path d="M3.4 7.2 L6.6 10.2 L9.8 7.2" fill="none" stroke="#555" stroke-width="1"/></svg></div>
<div class="eb" style="top:625.5px"><i></i></div>
<div class="rh" style="top:640.5px"></div>
<span class="t" style="left:21.70px;top:643.60px;font-size:9.4px;line-height:12px;color:#151515;transform:scaleX(0.985);">28</span>
<div class="hl" style="top:657.5px"></div>
<div class="dd" style="top:641.5px"><svg width="13" height="15" viewBox="0 0 13 15"><path d="M3.4 7.2 L6.6 10.2 L9.8 7.2" fill="none" stroke="#555" stroke-width="1"/></svg></div>
<div class="eb" style="top:643.0px"><i></i></div>
<div class="rh" style="top:658.0px"></div>
<span class="t" style="left:21.70px;top:661.10px;font-size:9.4px;line-height:12px;color:#151515;transform:scaleX(0.985);">29</span>
<div class="hl" style="top:675.0px"></div>
<div class="dd" style="top:659.0px"><svg width="13" height="15" viewBox="0 0 13 15"><path d="M3.4 7.2 L6.6 10.2 L9.8 7.2" fill="none" stroke="#555" stroke-width="1"/></svg></div>
<div class="eb" style="top:660.5px"><i></i></div>
<div class="rh" style="top:675.5px"></div>
<span class="t" style="left:21.70px;top:678.60px;font-size:9.4px;line-height:12px;color:#151515;transform:scaleX(0.985);">30</span>
<div class="hl" style="top:692.5px"></div>
<div class="dd" style="top:676.5px"><svg width="13" height="15" viewBox="0 0 13 15"><path d="M3.4 7.2 L6.6 10.2 L9.8 7.2" fill="none" stroke="#555" stroke-width="1"/></svg></div>
<div class="eb" style="top:678.0px"><i></i></div>
<div class="rh" style="top:693.0px"></div>
<span class="t" style="left:21.70px;top:696.10px;font-size:9.4px;line-height:12px;color:#151515;transform:scaleX(0.985);">31</span>
<div class="hl" style="top:710.0px"></div>
<div class="dd" style="top:694.0px"><svg width="13" height="15" viewBox="0 0 13 15"><path d="M3.4 7.2 L6.6 10.2 L9.8 7.2" fill="none" stroke="#555" stroke-width="1"/></svg></div>
<div class="eb" style="top:695.5px"><i></i></div>
<div class="rh" style="top:710.5px"></div>
<span class="t" style="left:21.70px;top:713.60px;font-size:9.4px;line-height:12px;color:#151515;transform:scaleX(0.985);">32</span>
<div class="hl" style="top:727.5px"></div>
<div class="dd" style="top:711.5px"><svg width="13" height="15" viewBox="0 0 13 15"><path d="M3.4 7.2 L6.6 10.2 L9.8 7.2" fill="none" stroke="#555" stroke-width="1"/></svg></div>
<div class="eb" style="top:713.0px"><i></i></div>
<div class="rh" style="top:728.0px"></div>
<span class="t" style="left:21.70px;top:731.10px;font-size:9.4px;line-height:12px;color:#151515;transform:scaleX(0.985);">33</span>
<div class="hl" style="top:745.0px"></div>
<div class="dd" style="top:729.0px"><svg width="13" height="15" viewBox="0 0 13 15"><path d="M3.4 7.2 L6.6 10.2 L9.8 7.2" fill="none" stroke="#555" stroke-width="1"/></svg></div>
<div class="eb" style="top:730.5px"><i></i></div>
<div class="rh" style="top:745.5px"></div>
<span class="t" style="left:21.70px;top:748.60px;font-size:9.4px;line-height:12px;color:#151515;transform:scaleX(0.985);">34</span>
<div class="hl" style="top:762.5px"></div>
<div class="dd" style="top:746.5px"><svg width="13" height="15" viewBox="0 0 13 15"><path d="M3.4 7.2 L6.6 10.2 L9.8 7.2" fill="none" stroke="#555" stroke-width="1"/></svg></div>
<div class="eb" style="top:748.0px"><i></i></div>
<div class="rh" style="top:763.0px"></div>
<span class="t" style="left:21.70px;top:766.10px;font-size:9.4px;line-height:12px;color:#151515;transform:scaleX(0.985);">35</span>
<div class="hl" style="top:780.0px"></div>
<div class="dd" style="top:764.0px"><svg width="13" height="15" viewBox="0 0 13 15"><path d="M3.4 7.2 L6.6 10.2 L9.8 7.2" fill="none" stroke="#555" stroke-width="1"/></svg></div>
<div class="eb" style="top:765.5px"><i></i></div>
<div class="rh" style="top:780.5px"></div>
<span class="t" style="left:21.70px;top:783.60px;font-size:9.4px;line-height:12px;color:#151515;transform:scaleX(0.985);">36</span>
<div class="hl" style="top:797.5px"></div>
<div class="dd" style="top:781.5px"><svg width="13" height="15" viewBox="0 0 13 15"><path d="M3.4 7.2 L6.6 10.2 L9.8 7.2" fill="none" stroke="#555" stroke-width="1"/></svg></div>
<div class="eb" style="top:783.0px"><i></i></div>
<div class="abs" style="left:91.0px;top:168px;width:1px;height:620px;background:#f1f1f1"></div>
<div class="abs" style="left:147.5px;top:168px;width:1px;height:620px;background:#f1f1f1"></div>
<div class="abs" style="left:204.0px;top:168px;width:1px;height:620px;background:#f1f1f1"></div>
<div class="abs" style="left:261.0px;top:168px;width:1px;height:620px;background:#f1f1f1"></div>
</div>
<div class="abs" style="left:341.5px;top:132px;width:2px;height:46px;background:#8c8c8c;border-radius:1px"></div>
<div class="abs" style="left:267.5px;top:784.5px;width:81px;height:20px;background:#fdfdfd;border:1px solid #d9d9d9;border-radius:3px;box-sizing:border-box"></div>
<span class="t" style="left:291.95px;top:787.80px;font-size:9.6px;line-height:12px;color:#111;transform:scaleX(1.032);">Applica</span>
<div class="abs" style="left:352.7px;top:112px;width:1.7px;height:690px;background:#666"></div>
<div class="vtab" style="top:114px;height:61px"></div>
<span class="t" style="left:361.5px;top:144.5px;font-size:9.5px;line-height:12px;color:#111;transform:translate(-50%,-50%) rotate(90deg) scaleX(1.022);transform-origin:center">Dati generali</span>
<div class="vtab" style="top:178px;height:52px"></div>
<span class="t" style="left:361.5px;top:204.0px;font-size:9.5px;line-height:12px;color:#111;transform:translate(-50%,-50%) rotate(90deg) scaleX(0.970);transform-origin:center">Geometria</span>
<div class="vtab" style="top:232.5px;height:53.5px"></div>
<span class="t" style="left:361.5px;top:259.25px;font-size:9.5px;line-height:12px;color:#111;transform:translate(-50%,-50%) rotate(90deg) scaleX(1.012);transform-origin:center">Stratigrafia</span>
<div class="vtab" style="top:289px;height:36.5px"></div>
<span class="t" style="left:361.5px;top:307.25px;font-size:9.5px;line-height:12px;color:#111;transform:translate(-50%,-50%) rotate(90deg) scaleX(0.947);transform-origin:center">Falda</span>
<div class="vtab" style="top:329px;height:58.5px"></div>
<span class="t" style="left:361.5px;top:358.25px;font-size:9.5px;line-height:12px;color:#111;transform:translate(-50%,-50%) rotate(90deg) scaleX(0.912);transform-origin:center">Sovraccarichi</span>
<div class="vtab sel" style="top:389px;height:41px"></div>
<span class="t" style="left:362.5px;top:409.5px;font-size:9.5px;line-height:12px;color:#111;transform:translate(-50%,-50%) rotate(90deg) scaleX(0.984);transform-origin:center">Chiodi</span>
<div class="vtab" style="top:431.5px;height:37.5px"></div>
<span class="t" style="left:361.5px;top:450.25px;font-size:9.5px;line-height:12px;color:#111;transform:translate(-50%,-50%) rotate(90deg) scaleX(0.947);transform-origin:center">Calcolo</span>
<div class="vtab" style="top:471px;height:43px"></div>
<span class="t" style="left:361.5px;top:492.5px;font-size:9.5px;line-height:12px;color:#111;transform:translate(-50%,-50%) rotate(90deg) scaleX(1.006);transform-origin:center">Risultati</span>
</div>
<div id="ribbon">
<div class="titlebar"></div>
<svg class="abs" style="left:4px;top:0" width="10" height="6"><path d="M4.6 0 L8.6 0 L6.6 2 Z" fill="#444"/></svg>
<div class="appbtn"></div>
<div class="rbody"></div>
<div class="tab"></div>
<span class="t" style="left:31.95px;top:14.80px;font-size:9.6px;line-height:12px;color:#3f5590;transform:scaleX(0.955);">HOME</span>
<div class="abs" style="left:149.0px;top:34px;width:1px;height:69px;background:#c4c4c4"></div>
<div class="abs" style="left:235.0px;top:34px;width:1px;height:69px;background:#c4c4c4"></div>
<div class="abs" style="left:593.2px;top:34px;width:1px;height:69px;background:#c4c4c4"></div>
<div class="abs" style="left:546px;top:39px;width:1px;height:49px;background:#e2e2e2"></div>
<div class="abs" style="left:472px;top:35px;width:33.5px;height:57px;background:#bcd0f1"></div>
<span class="t" style="left:7.00px;top:64.80px;font-size:9.4px;line-height:12px;color:#4a4a4a;transform:scaleX(1.012);">Nuovo</span>
<span class="t" style="left:44.50px;top:64.80px;font-size:9.4px;line-height:12px;color:#4a4a4a;transform:scaleX(1.017);">Apri</span>
<span class="t" style="left:74.50px;top:64.80px;font-size:9.4px;line-height:12px;color:#4a4a4a;transform:scaleX(0.893);">Salva</span>
<span class="t" style="left:103.75px;top:64.80px;font-size:9.4px;line-height:12px;color:#4a4a4a;transform:scaleX(0.957);">Salva con</span>
<span class="t" style="left:111.72px;top:77.30px;font-size:9.4px;line-height:12px;color:#4a4a4a;transform:scaleX(0.967);">nome</span>
<span class="t" style="left:155.75px;top:64.80px;font-size:9.4px;line-height:12px;color:#4a4a4a;transform:scaleX(1.002);">Archivio</span>
<span class="t" style="left:160.00px;top:77.30px;font-size:9.4px;line-height:12px;color:#4a4a4a;transform:scaleX(1.038);">chiodi</span>
<span class="t" style="left:195.03px;top:64.80px;font-size:9.4px;line-height:12px;color:#4a4a4a;transform:scaleX(1.009);">Archivio</span>
<span class="t" style="left:197.47px;top:77.30px;font-size:9.4px;line-height:12px;color:#4a4a4a;transform:scaleX(1.060);">terreni</span>
<span class="t" style="left:250.73px;top:64.80px;font-size:9.4px;line-height:12px;color:#4a4a4a;transform:scaleX(1.002);">Dati</span>
<span class="t" style="left:241.98px;top:77.30px;font-size:9.4px;line-height:12px;color:#4a4a4a;transform:scaleX(1.024);">generali</span>
<span class="t" style="left:282.00px;top:64.80px;font-size:9.4px;line-height:12px;color:#4a4a4a;transform:scaleX(0.980);">Geometria</span>
<span class="t" style="left:331.27px;top:64.80px;font-size:9.4px;line-height:12px;color:#4a4a4a;transform:scaleX(1.017);">Stratigrafia</span>
<span class="t" style="left:385.00px;top:64.80px;font-size:9.4px;line-height:12px;color:#4a4a4a;transform:scaleX(0.978);">Falda</span>
<span class="t" style="left:415.50px;top:64.80px;font-size:9.4px;line-height:12px;color:#4a4a4a;transform:scaleX(0.957);">Sovraccarichi</span>
<span class="t" style="left:475.00px;top:64.80px;font-size:9.4px;line-height:12px;color:#3d5a94;transform:scaleX(1.051);">Chiodi</span>
<span class="t" style="left:508.75px;top:64.80px;font-size:9.4px;line-height:12px;color:#4a4a4a;transform:scaleX(0.973);">Calcolo</span>
<span class="t" style="left:552.50px;top:64.80px;font-size:9.4px;line-height:12px;color:#4a4a4a;transform:scaleX(1.032);">Risultati</span>
<span class="t" style="left:68.78px;top:94.40px;font-size:9.4px;line-height:12px;color:#4a4a4a;transform:scaleX(0.941);">File</span>
<span class="t" style="left:179.50px;top:94.40px;font-size:9.4px;line-height:12px;color:#4a4a4a;transform:scaleX(0.993);">Archivi</span>
<span class="t" style="left:407.02px;top:94.40px;font-size:9.4px;line-height:12px;color:#4a4a4a;transform:scaleX(1.002);">Dati</span>
<div class="rshadow"></div>
<svg class="abs" style="left:0;top:30px" width="600" height="40" viewBox="0 30 600 40">
<path d="M12.7 39.4 H24 L29.6 45 V62 H12.7 Z" fill="#fff" stroke="#a3a3a3" stroke-width="1"/>
<path d="M24 39.4 V45 H29.6" fill="none" stroke="#a3a3a3" stroke-width="1"/>
<path d="M42 58.4 L43 44.4 H52.3 L55 41.8 H61.3 L61.8 47.8" fill="#fbf6ea" stroke="#ecd6a6" stroke-width="1"/>
<path d="M42 58.8 L47.4 47.8 H65.6 L60.4 58.8 Z" fill="#e9bd68"/>
<rect x="74.1" y="39.8" width="20.6" height="20.8" rx="1" fill="#8f5fc2"/>
<rect x="77.39999999999999" y="40.8" width="14" height="10.3" fill="#fafafa"/>
<rect x="79.3" y="54.4" width="9.4" height="6.2" fill="#fafafa"/>
<rect x="81.19999999999999" y="56" width="2.4" height="4.6" fill="#8f5fc2"/>
<rect x="112.9" y="39.8" width="20.6" height="20.8" rx="1" fill="#8f5fc2"/>
<rect x="116.2" y="40.8" width="14" height="10.3" fill="#fafafa"/>
<rect x="118.10000000000001" y="54.4" width="9.4" height="6.2" fill="#fafafa"/>
<rect x="120.0" y="56" width="2.4" height="4.6" fill="#8f5fc2"/>
<path d="M123.2 61.6 L134.6 50" stroke="#f6f7f8" stroke-width="5.4" stroke-linecap="butt"/>
<path d="M124 60.8 L133.6 51" stroke="#3f7fd0" stroke-width="3.2"/>
<path d="M134 50.6 L135.2 49.4" stroke="#2c5fa8" stroke-width="3.2"/>
<path d="M122.6 62.4 L124.4 60.4 L123.4 61.8 Z" fill="#2c5fa8" stroke="#2c5fa8" stroke-width="1"/>
<rect x="161.2" y="39.3" width="22.8" height="23" fill="#fbfbfb" stroke="#a9a9a9" stroke-width="1"/>
<rect x="161.2" y="39.3" width="22.8" height="2.6" fill="#a6a6a6"/>
<path d="M165.39999999999998 41.9 V62.3 M176.39999999999998 41.9 V62.3 M161.2 48.8 H184.0 M161.2 54.4 H184.0" stroke="#a9a9a9" stroke-width="0.9" fill="none"/>
<rect x="166.39999999999998" y="43" width="9" height="4.799999999999997" fill="#dcdcdc"/>
<rect x="166.39999999999998" y="50" width="9" height="3.3999999999999986" fill="#dcdcdc"/>
<rect x="166.39999999999998" y="55.6" width="9" height="5.600000000000001" fill="#dcdcdc"/>
<path d="M177.6 43.4 H182.6 M180.1 43.4 V60.6" stroke="#666a70" stroke-width="1.6" fill="none"/>
<rect x="200.3" y="39.3" width="22.8" height="23" fill="#fbfbfb" stroke="#a9a9a9" stroke-width="1"/>
<rect x="200.3" y="39.3" width="22.8" height="2.6" fill="#a6a6a6"/>
<path d="M204.5 41.9 V62.3 M215.5 41.9 V62.3 M200.3 48.8 H223.10000000000002 M200.3 54.4 H223.10000000000002" stroke="#a9a9a9" stroke-width="0.9" fill="none"/>
<rect x="205.5" y="43" width="9" height="4.799999999999997" fill="#dcdcdc"/>
<rect x="205.5" y="50" width="9" height="3.3999999999999986" fill="#dcdcdc"/>
<rect x="205.5" y="55.6" width="9" height="5.600000000000001" fill="#dcdcdc"/>
<rect x="215.6" y="41.9" width="7.5" height="7.2" fill="#7cc242"/>
<rect x="215.6" y="49.1" width="7.5" height="5" fill="#f6c233"/>
<rect x="215.6" y="54.1" width="7.5" height="8.2" fill="#1f84d6"/>
<path d="M247.4 44.4 L254 37.9 H268.8 V63.3 H247.4 Z" fill="#f4f7f9" stroke="#b5bcc2" stroke-width="0.9"/>
<path d="M247.4 44.4 H254 V37.9" fill="#fff" stroke="#b5bcc2" stroke-width="0.9"/>
<path d="M250.5 48.5 H266 M250.5 53.5 H266 M250.5 58.5 H266 M257 38 V63 M263 52 V63" stroke="#c3ccd3" stroke-width="0.8" fill="none"/>
<path d="M251 47 v4 M253 47 v4 M255 47 v4" stroke="#8e979e" stroke-width="1.1" fill="none"/>
<path d="M251 52 v4 M253 52 v4 M255 52 v4" stroke="#8e979e" stroke-width="1.1" fill="none"/>
<path d="M251 57 v4 M253 57 v4 M255 57 v4" stroke="#8e979e" stroke-width="1.1" fill="none"/>
<rect x="257.3" y="37.6" width="13.2" height="14.4" fill="#e4f1f6"/>
<path d="M259 51.6 V48 Q259 45.2 262.6 45 H266.4 Q270 45.2 270 48 V51.6 Z" fill="#1d2733"/>
<path d="M263.4 45 L264.5 48.6 L265.6 45 Z" fill="#8fa3b8"/>
<ellipse cx="264.5" cy="42.4" rx="2.2" ry="2.8" fill="#c8a688"/>
<path d="M261.9 42 Q261.8 38.2 264.6 38.2 Q267.3 38.2 267.1 42 Q266.4 40 264.5 40.2 Q262.6 40 261.9 42 Z" fill="#3a2a20"/>
<path d="M291.8 60 Q292.2 54.6 296.8 53.6 V60 Z" fill="#c9a450"/>
<path d="M302.2 41.6 L314.8 41.1 V60 H300.4 Z" fill="#b5854a"/>
<path d="M302.2 41.6 L304 41.5 L301.8 60 H300.4 Z" fill="#c79a5a"/>
<rect x="296.8" y="43.3" width="3.5" height="17.2" fill="#6f7384"/>
<rect x="296.8" y="54" width="3.5" height="6.5" fill="#8d78ad"/>
<rect x="296.6" y="43.1" width="3.9" height="1.6" fill="#555862"/>
<path d="M343.2 44.6 L348.6 39.5 H361 V62.3 H343.2 Z" fill="#fbfbfb" stroke="#d0d0d0" stroke-width="0.9"/>
<path d="M343.2 44.6 H348.6 V39.5" fill="none" stroke="#d0d0d0" stroke-width="0.9"/>
<path d="M346.2 48.6 L351.4 46 H365.8 L360.6 48.6 Z" fill="#6e7a58"/>
<rect x="346.2" y="48.6" width="14.4" height="3" fill="#8a5a2e"/>
<rect x="346.2" y="51.6" width="14.4" height="4" fill="#d8452c"/>
<rect x="346.2" y="55.6" width="14.4" height="3.9" fill="#8a6a3a"/>
<path d="M360.6 48.6 L365.8 46 V56.6 L360.6 59.5 Z" fill="#9a7440"/>
<path d="M360.6 51.6 L365.8 49.4 V52.6 L360.6 55.6 Z" fill="#f0a020"/>
<path d="M383.2 51 L392 45.2 H409.8 L403 51 Z" fill="#5a2d18"/>
<rect x="383.2" y="51" width="19.8" height="7.2" fill="#1b6fb5"/>
<path d="M383.2 53 Q388 51.4 393 53.4 T403 52.6" stroke="#c9a46a" stroke-width="1.2" fill="none"/>
<path d="M383.2 57.6 Q390 55.6 396 57.4 T403 56.8 V58.2 H383.2 Z" fill="#b08a58"/>
<path d="M403 51 L409.8 45.2 V52.4 L403 58.2 Z" fill="#175d99"/>
<path d="M403.6 54.6 L406 49.4 L407 50.6 L409.4 47.4" stroke="#d4b07a" stroke-width="1.1" fill="none"/>
<path d="M431.2 62.2 Q431.6 56.8 437 55.2 V62.2 Z" fill="#c9a450"/>
<rect x="437" y="47" width="2.6" height="15.6" fill="#6f7384"/>
<path d="M439.6 47.6 L453.4 46.6 V61.8 H439.6 Z" fill="#c8782e"/>
<path d="M442.6 50 h3 v3 h-3z M447.6 50 h3 v3 h-3z M442.6 55.4 h3 v3 h-3z M447.6 55.4 h3 v3 h-3z" fill="#e39a3c"/>
<path d="M442.4 46.8 L446.6 39.6 L452.6 46.2 Z" fill="#3b4654"/>
<path d="M445.4 42.4 L447.6 41 L449 43 Z" fill="#b9c4cf"/>
<path d="M478.2 61.6 L495.2 42.8" stroke="#7d848c" stroke-width="2.6" stroke-linecap="round"/>
<path d="M478.2 61.6 L481 57.6" stroke="#8f969d" stroke-width="1.6" stroke-linecap="round"/>
<path d="M493.2 39.8 L500.4 46.2 L495 45.2 Z" fill="#8c9299"/>
<path d="M492.9 39.9 L495.4 42.4" stroke="#5c636b" stroke-width="1.3"/>
<path d="M519 40 H529.4 L535 45.6 V62.3 H517.5 V57" fill="none" stroke="#555" stroke-width="1.1"/>
<path d="M529.4 40 V45.6 H535" fill="none" stroke="#555" stroke-width="1.1"/>
<circle cx="519.2" cy="48.6" r="4.2" fill="none" stroke="#2d2d2d" stroke-width="2.6"/>
<circle cx="519.2" cy="48.6" r="6.3" fill="none" stroke="#2d2d2d" stroke-width="2.4" stroke-dasharray="2.5 2.45"/>
<circle cx="526.9" cy="57.1" r="2.3" fill="none" stroke="#2d2d2d" stroke-width="1.6"/>
<circle cx="526.9" cy="57.1" r="3.7" fill="none" stroke="#2d2d2d" stroke-width="1.5" stroke-dasharray="1.5 1.4"/>
<circle cx="528.8" cy="48.6" r="1.5" fill="none" stroke="#8a8a8a" stroke-width="0.9"/>
<path d="M559.2 43.6 L564.6 38.2 H580 V63.4 H559.2 Z" fill="#f7fafb" stroke="#b3c4cc" stroke-width="0.9"/>
<path d="M559.2 43.6 H564.6 V38.2" fill="none" stroke="#b3c4cc" stroke-width="0.9"/>
<rect x="572" y="39.6" width="5.4" height="5.2" fill="#fff" stroke="#b3c4cc" stroke-width="0.8"/>
<path d="M561.6 47.4 H578 V61 H561.6 Z M561.6 52 H578 M561.6 56.4 H578 M571.6 47.4 V61 M575 47.4 V61" fill="#e6f0f4" stroke="#a9c0ca" stroke-width="0.8"/>
<path d="M563.4 48.4 v3 M565.6 48.4 h2 v3 h-2z M569.4 48.4 h1.4 v3 h-1.4" stroke="#5f6e78" stroke-width="0.8" fill="none"/>
<path d="M563.4 52.9 v3 M565.6 52.9 h2 v3 h-2z M569.4 52.9 h1.4 v3 h-1.4" stroke="#5f6e78" stroke-width="0.8" fill="none"/>
<path d="M563.4 57.4 v3 M565.6 57.4 h2 v3 h-2z M569.4 57.4 h1.4 v3 h-1.4" stroke="#5f6e78" stroke-width="0.8" fill="none"/>
</svg>
</div>
<div class="abs" style="left:0;top:9px;width:1px;height:791px;background:#222"></div>
<div class="abs" style="left:1597px;top:109px;width:3px;height:691px;background:#f0f0f0"></div>
</body></html>
